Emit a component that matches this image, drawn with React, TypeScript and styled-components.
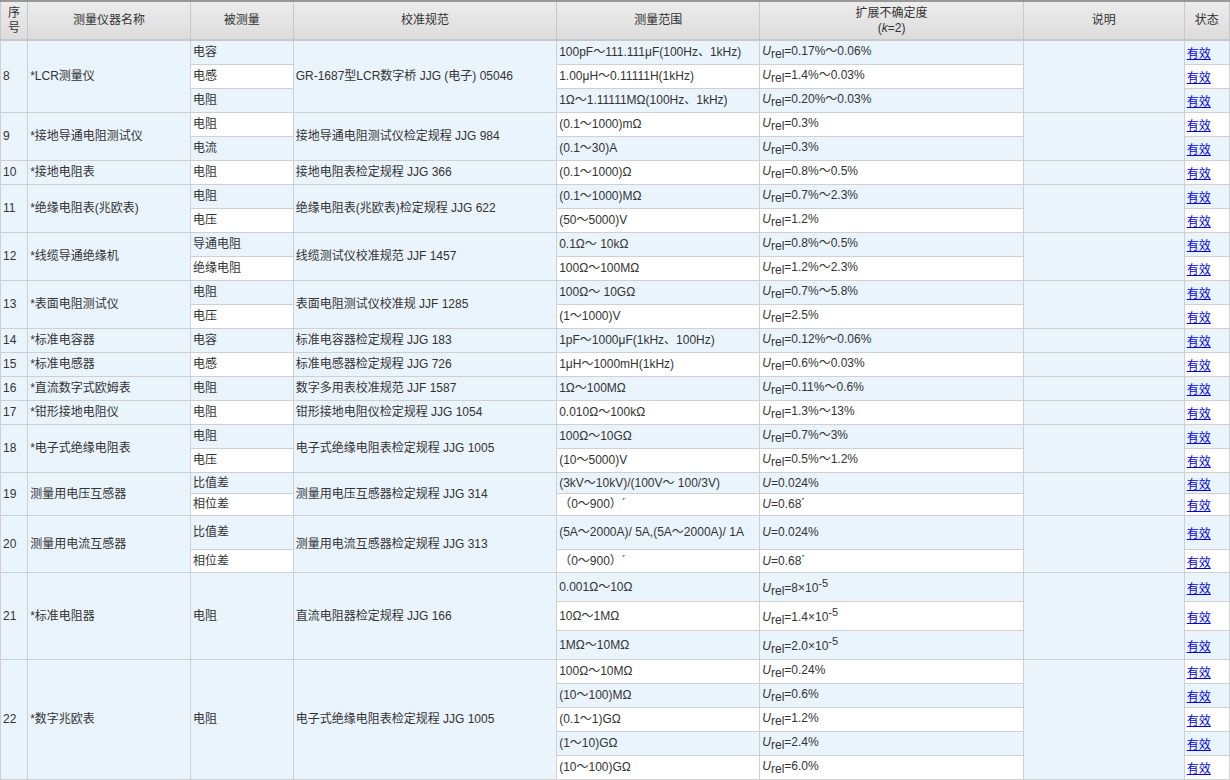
import React, { FC } from "react";
import styled, { createGlobalStyle } from "styled-components";

const Global = createGlobalStyle`
	body {
		margin: 0;
		background: #fff;
		font-family: "Liberation Sans", Arial, "Noto Sans CJK SC", sans-serif;
		font-size: 12px;
		color: #333;
	}
`;

type Unc = { u: "rel" | ""; v: string; exp?: string };
type Row = { qty?: string; range: string; unc: Unc; h?: number };
type Group = { no: string; name: string; spec: string; rows: Row[]; oneQty?: string };

const rel = (v: string, exp?: string): Unc => ({ u: "rel", v, exp });
const plain = (v: string): Unc => ({ u: "", v });

const groups: Group[] = [
	{ no: "8", name: "*LCR测量仪", spec: "GR-1687型LCR数字桥 JJG (电子) 05046", rows: [
		{ qty: "电容", range: "100pF～111.111μF(100Hz、1kHz)", unc: rel("=0.17%～0.06%") },
		{ qty: "电感", range: "1.00μH～0.11111H(1kHz)", unc: rel("=1.4%～0.03%") },
		{ qty: "电阻", range: "1Ω～1.11111MΩ(100Hz、1kHz)", unc: rel("=0.20%～0.03%") },
	] },
	{ no: "9", name: "*接地导通电阻测试仪", spec: "接地导通电阻测试仪检定规程 JJG 984", rows: [
		{ qty: "电阻", range: "(0.1～1000)mΩ", unc: rel("=0.3%") },
		{ qty: "电流", range: "(0.1～30)A", unc: rel("=0.3%") },
	] },
	{ no: "10", name: "*接地电阻表", spec: "接地电阻表检定规程 JJG 366", rows: [
		{ qty: "电阻", range: "(0.1～1000)Ω", unc: rel("=0.8%～0.5%") },
	] },
	{ no: "11", name: "*绝缘电阻表(兆欧表)", spec: "绝缘电阻表(兆欧表)检定规程 JJG 622", rows: [
		{ qty: "电阻", range: "(0.1～1000)MΩ", unc: rel("=0.7%～2.3%") },
		{ qty: "电压", range: "(50～5000)V", unc: rel("=1.2%") },
	] },
	{ no: "12", name: "*线缆导通绝缘机", spec: "线缆测试仪校准规范 JJF 1457", rows: [
		{ qty: "导通电阻", range: "0.1Ω～ 10kΩ", unc: rel("=0.8%～0.5%") },
		{ qty: "绝缘电阻", range: "100Ω～100MΩ", unc: rel("=1.2%～2.3%") },
	] },
	{ no: "13", name: "*表面电阻测试仪", spec: "表面电阻测试仪校准规 JJF 1285", rows: [
		{ qty: "电阻", range: "100Ω～ 10GΩ", unc: rel("=0.7%～5.8%") },
		{ qty: "电压", range: "(1～1000)V", unc: rel("=2.5%") },
	] },
	{ no: "14", name: "*标准电容器", spec: "标准电容器检定规程 JJG 183", rows: [
		{ qty: "电容", range: "1pF～1000μF(1kHz、100Hz)", unc: rel("=0.12%～0.06%") },
	] },
	{ no: "15", name: "*标准电感器", spec: "标准电感器检定规程 JJG 726", rows: [
		{ qty: "电感", range: "1μH～1000mH(1kHz)", unc: rel("=0.6%～0.03%") },
	] },
	{ no: "16", name: "*直流数字式欧姆表", spec: "数字多用表校准规范 JJF 1587", rows: [
		{ qty: "电阻", range: "1Ω～100MΩ", unc: rel("=0.11%～0.6%") },
	] },
	{ no: "17", name: "*钳形接地电阻仪", spec: "钳形接地电阻仪检定规程 JJG 1054", rows: [
		{ qty: "电阻", range: "0.010Ω～100kΩ", unc: rel("=1.3%～13%") },
	] },
	{ no: "18", name: "*电子式绝缘电阻表", spec: "电子式绝缘电阻表检定规程 JJG 1005", rows: [
		{ qty: "电阻", range: "100Ω～10GΩ", unc: rel("=0.7%～3%") },
		{ qty: "电压", range: "(10～5000)V", unc: rel("=0.5%～1.2%") },
	] },
	{ no: "19", name: "测量用电压互感器", spec: "测量用电压互感器检定规程 JJG 314", rows: [
		{ qty: "比值差", range: "(3kV～10kV)/(100V～ 100/3V)", unc: plain("=0.024%"), h: 21 },
		{ qty: "相位差", range: "（0～900）´", unc: plain("=0.68´"), h: 22 },
	] },
	{ no: "20", name: "测量用电流互感器", spec: "测量用电流互感器检定规程 JJG 313", rows: [
		{ qty: "比值差", range: "(5A～2000A)/ 5A,(5A～2000A)/ 1A", unc: plain("=0.024%"), h: 34 },
		{ qty: "相位差", range: "（0～900）´", unc: plain("=0.68´"), h: 23 },
	] },
	{ no: "21", name: "*标准电阻器", spec: "直流电阻器检定规程 JJG 166", oneQty: "电阻", rows: [
		{ range: "0.001Ω～10Ω", unc: rel("=8×10", "-5"), h: 29 },
		{ range: "10Ω～1MΩ", unc: rel("=1.4×10", "-5"), h: 29 },
		{ range: "1MΩ～10MΩ", unc: rel("=2.0×10", "-5"), h: 29 },
	] },
	{ no: "22", name: "*数字兆欧表", spec: "电子式绝缘电阻表检定规程 JJG 1005", oneQty: "电阻", rows: [
		{ range: "100Ω～10MΩ", unc: rel("=0.24%") },
		{ range: "(10～100)MΩ", unc: rel("=0.6%") },
		{ range: "(0.1～1)GΩ", unc: rel("=1.2%") },
		{ range: "(1～10)GΩ", unc: rel("=2.4%") },
		{ range: "(10～100)GΩ", unc: rel("=6.0%") },
	] },
];

const Table = styled.table`
	border-collapse: collapse;
	width: 1230px;
	table-layout: fixed;
	border-left: 1px solid #999;
	border-top: 2px solid #999;
`;

const Th = styled.th<{ $w: number }>`
	width: ${(p) => p.$w}px;
	height: 37px;
	font-weight: normal;
	color: #333;
	padding: 0 2px;
	border: 1px solid #c8c8c8;
	border-bottom: 2px solid #c8c8c8;
	background: linear-gradient(#ececec, #dcdcdc);
	line-height: 15px;
`;

const Tr = styled.tr<{ $alt: boolean; $h: number }>`
	height: ${(p) => p.$h}px;
	background: ${(p) => (p.$alt ? "#fff" : "#eaf4fd")};
`;

const Td = styled.td`
	border: 1px solid #d0d0d0;
	padding: 0 3px 0 2px;
	line-height: 14px;
	vertical-align: middle;
	white-space: normal;
	overflow: hidden;
`;

const Merged = styled(Td)`
	background: #eaf4fd;
`;

const Link = styled.a`
	color: #0000ee;
	text-decoration: underline;
	display: inline-block;
	padding-top: 4px;
`;

const UncText: FC<{ unc: Unc }> = ({ unc }) => (
	<>
		<i>U</i>
		{unc.u && <sub style={{ fontSize: 12, verticalAlign: -3 }}>rel</sub>}
		{unc.v}
		{unc.exp && <sup style={{ fontSize: 11, verticalAlign: 5 }}>{unc.exp}</sup>}
	</>
);

// column widths minus padding and borders so the fixed layout lands on the reference grid
const widths = [28, 163, 103, 263, 203, 263, 161, 46].map((w) => w - 6);
const heads = ["序号", "测量仪器名称", "被测量", "校准规范", "测量范围", "", "说明", "状态"];

export default function App() {
	let idx = 0;
	return (
		<>
			<Global />
			<Table>
				<thead>
					<tr>
						{heads.map((h, i) => (
							<Th key={i} $w={widths[i]}>
								{i === 5 ? <>扩展不确定度<br />(<i>k</i>=2)</> : h}
							</Th>
						))}
					</tr>
				</thead>
				<tbody>
					{groups.map((g) =>
						g.rows.map((r, j) => {
							const alt = idx++ % 2 === 1;
							const n = g.rows.length;
							return (
								<Tr key={g.no + j} $alt={alt} $h={r.h ?? 24}>
									{j === 0 && <Merged rowSpan={n}>{g.no}</Merged>}
									{j === 0 && <Merged rowSpan={n}>{g.name}</Merged>}
									{g.oneQty ? (j === 0 && <Merged rowSpan={n}>{g.oneQty}</Merged>) : <Td>{r.qty}</Td>}
									{j === 0 && <Merged rowSpan={n}>{g.spec}</Merged>}
									<Td>{r.range}</Td>
									<Td><UncText unc={r.unc} /></Td>
									{j === 0 && <Merged rowSpan={n} />}
									<Td><Link href="#">有效</Link></Td>
								</Tr>
							);
						})
					)}
				</tbody>
			</Table>
		</>
	);
}
